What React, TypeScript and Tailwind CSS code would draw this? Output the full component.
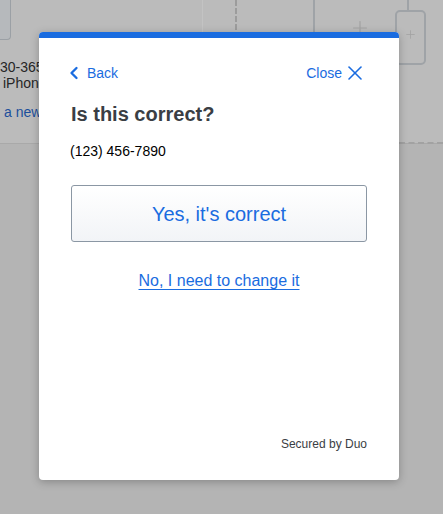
import { ChevronLeft, X, Plus } from "lucide-react"

const font = { fontFamily: '"Liberation Sans", Arial, sans-serif' }

function BackgroundPage() {
  return (
    <div className="flex h-full flex-col bg-[#b4b4b4]">
      {/* top strip of the page behind the overlay */}
      <div className="flex h-[144px] border-b border-[#a9a9a9] bg-[#bbbbbb]">
        <div className="w-[203px] border-r border-[#c3c3c3]">
          <div className="h-[40px] w-[11px] rounded-br-[4px] border-r border-b border-[#9ba0a5] bg-[#b6b9bc]" />
          <p className="mt-[17px] whitespace-nowrap text-[14px] leading-[20px] text-[#262626]">30-365</p>
          <p className="-mt-[4px] whitespace-nowrap pl-[3px] text-[14px] leading-[20px] text-[#262626]">iPhone</p>
          <p className="mt-[9px] whitespace-nowrap pl-[4px] text-[14px] leading-[20px] text-[#1b4f9c]">a new</p>
        </div>
        <div className="w-[110px]">
          <div className="ml-[32px] h-[30px] border-l-2 border-dashed border-[#9c9c9c]" />
        </div>
        <div className="flex flex-1 border-l-2 border-[#9fa3a7]">
          <div className="ml-[34px] pt-[17px] text-[#a3a3a3]">
            <Plus size={22} strokeWidth={1.3} />
          </div>
          <div className="ml-[24px] flex flex-col items-center">
            <div className="ml-[-6px] h-[10px] w-0 border-l-2 border-[#9fa3a7]" />
            <div className="flex h-[55px] w-[31px] items-start justify-center rounded-[5px] border-2 border-[#9fa3a7] pt-[16px] text-[#a3a3a3]">
              <Plus size={13} strokeWidth={1.5} />
            </div>
          </div>
        </div>
      </div>
      <div className="ml-[399px] -mt-[2px] h-0 border-t-2 border-dashed border-[#a2a2a2]" />
    </div>
  )
}

function Modal() {
  return (
    <div className="absolute left-[39px] top-[32px] flex h-[448px] w-[360px] flex-col overflow-hidden rounded-[4px] bg-white shadow-[0_2px_8px_rgba(0,0,0,0.25)]">
      <div className="h-[6px] bg-[#1a6ce0]" />
      <div className="flex flex-1 flex-col px-[32px] pt-[25px] pb-[28px]">
        <div className="flex h-[20px] items-center justify-between text-[14px] leading-[20px] text-[#1a6ce0]">
          <button className="flex items-center gap-[3px]">
            <ChevronLeft size={20} strokeWidth={2.8} className="-ml-[7px]" />
            <span>Back</span>
          </button>
          <button className="flex items-center gap-[1px]">
            <span>Close</span>
            <X size={24} strokeWidth={1.6} />
          </button>
        </div>
        <h1 className="mt-[17px] text-[20px] font-bold leading-[28px] text-[#3a3e44]">Is this correct?</h1>
        <p className="mt-[13px] -ml-[1px] text-[14px] leading-[20px] text-black">(123) 456-7890</p>
        <button className="mt-[24px] h-[57px] w-full rounded-[3px] border border-[#8b97a4] bg-gradient-to-b from-white to-[#f2f4f7] text-[20px] text-[#1a6ce0]">
          Yes, it's correct
        </button>
        <a className="mt-[27px] self-center text-[16px] leading-[24px] text-[#1a6ce0] underline underline-offset-[3px]">
          No, I need to change it
        </a>
        <p className="mt-auto self-end text-[12px] leading-[16px] text-[#3a3e44]">Secured by Duo</p>
      </div>
    </div>
  )
}

export default function App() {
  return (
    <div className="relative h-[514px] w-[443px] overflow-hidden" style={font}>
      <BackgroundPage />
      <Modal />
    </div>
  )
}
